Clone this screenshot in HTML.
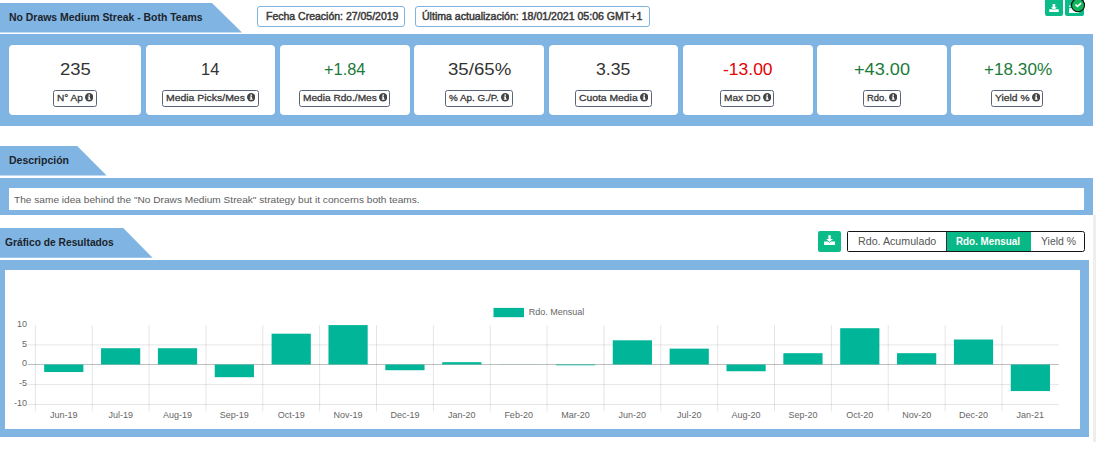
<!DOCTYPE html>
<html><head><meta charset="utf-8">
<style>
*{margin:0;padding:0;box-sizing:border-box}
html,body{width:1096px;height:452px;overflow:hidden;background:#fff;font-family:"Liberation Sans",sans-serif}
.abs{position:absolute}
.t{position:absolute;white-space:nowrap;transform-origin:0 0}
.blue{background:#80b5e3}
.card{position:absolute;top:44.7px;height:70.3px;background:#fff;border-radius:4px;box-shadow:0 0 1px #6aa6da}
.lbl{position:absolute;top:90.2px;height:16.6px;border:1px solid #5a6478;border-radius:2.5px}
.hbox{position:absolute;top:6.2px;height:20.6px;border:1px solid #7fb3e0;border-radius:3px}
.gbtn{position:absolute;background:#0cbc88;border-radius:2px}
</style></head><body>

<div class="abs" style="left:0;top:3px;width:242px;height:29.6px;background:#80b5e3;clip-path:polygon(0 0,212px 0,242px 29.6px,0 29.6px)"></div>
<div class="t" style="left:9.30px;top:10.66px;font-size:10.9px;line-height:12.535px;font-weight:bold;color:#1c232b;transform:scaleX(0.9585);">No Draws Medium Streak - Both Teams</div>
<div class="hbox" style="left:257.3px;width:148.2px"></div>
<div class="t" style="left:265.65px;top:10.59px;font-size:10px;line-height:11.5px;color:#3a3a3a;transform:scaleX(1.0491);-webkit-text-stroke:0.45px #3a3a3a;">Fecha Creación: 27/05/2019</div>
<div class="hbox" style="left:414.7px;width:234.9px"></div>
<div class="t" style="left:421.55px;top:10.59px;font-size:10px;line-height:11.5px;color:#3a3a3a;transform:scaleX(1.0554);-webkit-text-stroke:0.45px #3a3a3a;">Última actualización: 18/01/2021 05:06 GMT+1</div>
<div class="gbtn" style="left:1045.1px;top:-2px;width:17.9px;height:17.9px"></div>
<div class="gbtn" style="left:1065px;top:-2px;width:19px;height:17.9px"></div>
<svg class="abs" style="left:0;top:0" width="1096" height="30" viewBox="0 0 1096 30"><path d="M1052.6 4h2.6v3.3h1.7l-2.95 2.6-2.95-2.6h1.6z" fill="#fff"/><path d="M1049.2 9.2h3.2l1.5 1.1 1.5-1.1h3.3v2.8h-9.5z" fill="#fff"/><path d="M1069.1 5.6h1.4v1.5h-1.4z" fill="#fff"/><path d="M1069.1 8.2h1.4l1-0.4 3 0.6 2 1v3.5h-7.4z" fill="#fff"/><path d="M1069.1 11.6h10v1.3h-10z" fill="#fff"/><circle cx="1078" cy="5.3" r="6.5" fill="#12b45c" stroke="#0a0a0a" stroke-width="1.1"/><path d="M1075.4 4.6l2.2 1.8 3.5-3.4" fill="none" stroke="#fff" stroke-width="1.7"/></svg>
<div class="abs blue" style="left:0;top:34px;width:1093px;height:91.7px"></div>
<div class="card" style="left:8.85px;width:132.15px"></div>
<div class="card" style="left:145.8px;width:129.20px"></div>
<div class="card" style="left:280px;width:130.00px"></div>
<div class="card" style="left:414px;width:130.00px"></div>
<div class="card" style="left:549px;width:129.00px"></div>
<div class="card" style="left:683px;width:130.00px"></div>
<div class="card" style="left:817px;width:130.00px"></div>
<div class="card" style="left:951px;width:133.00px"></div>
<div class="t" style="left:59.50px;top:59.83px;font-size:16.9px;line-height:19.435px;color:#333;transform:scaleX(1.0926);">235</div>
<div class="t" style="left:201.10px;top:59.83px;font-size:16.9px;line-height:19.435px;color:#333;transform:scaleX(0.9738);">14</div>
<div class="t" style="left:323.80px;top:59.83px;font-size:16.9px;line-height:19.435px;color:#1b7a3a;transform:scaleX(0.9683);">+1.84</div>
<div class="t" style="left:447.50px;top:59.83px;font-size:16.9px;line-height:19.435px;color:#333;transform:scaleX(1.1042);">35/65%</div>
<div class="t" style="left:596.20px;top:59.83px;font-size:16.9px;line-height:19.435px;color:#333;transform:scaleX(1.0460);">3.35</div>
<div class="t" style="left:722.90px;top:59.83px;font-size:16.9px;line-height:19.435px;color:#e60000;transform:scaleX(1.0352);">-13.00</div>
<div class="t" style="left:854.10px;top:59.83px;font-size:16.9px;line-height:19.435px;color:#1b7a3a;transform:scaleX(1.0738);">+43.00</div>
<div class="t" style="left:983.60px;top:59.83px;font-size:16.9px;line-height:19.435px;color:#1b7a3a;transform:scaleX(1.0150);">+18.30%</div>
<div class="lbl" style="left:53.2px;width:43.40px"></div>
<div class="t" style="left:56.95px;top:91.87px;font-size:9.8px;line-height:11.27px;color:#383838;transform:scaleX(1.0291);-webkit-text-stroke:0.3px #383838;">N° Ap</div>
<svg class="abs" style="left:85.00px;top:93.40px" width="8.4" height="8.4" viewBox="0 0 84 84"><circle cx="42" cy="42" r="42" fill="#444"/><rect x="35" y="35" width="15" height="28" fill="#fff"/><rect x="28" y="35" width="10" height="9" fill="#fff"/><rect x="28" y="57" width="29" height="10" fill="#fff"/><circle cx="42" cy="21" r="8.5" fill="#fff"/></svg>
<div class="lbl" style="left:162.2px;width:96.40px"></div>
<div class="t" style="left:165.95px;top:91.87px;font-size:9.8px;line-height:11.27px;color:#383838;transform:scaleX(1.0652);-webkit-text-stroke:0.3px #383838;">Media Picks/Mes</div>
<svg class="abs" style="left:247.00px;top:93.40px" width="8.4" height="8.4" viewBox="0 0 84 84"><circle cx="42" cy="42" r="42" fill="#444"/><rect x="35" y="35" width="15" height="28" fill="#fff"/><rect x="28" y="35" width="10" height="9" fill="#fff"/><rect x="28" y="57" width="29" height="10" fill="#fff"/><circle cx="42" cy="21" r="8.5" fill="#fff"/></svg>
<div class="lbl" style="left:299.2px;width:91.30px"></div>
<div class="t" style="left:302.95px;top:91.87px;font-size:9.8px;line-height:11.27px;color:#383838;transform:scaleX(1.0343);-webkit-text-stroke:0.3px #383838;">Media Rdo./Mes</div>
<svg class="abs" style="left:378.90px;top:93.40px" width="8.4" height="8.4" viewBox="0 0 84 84"><circle cx="42" cy="42" r="42" fill="#444"/><rect x="35" y="35" width="15" height="28" fill="#fff"/><rect x="28" y="35" width="10" height="9" fill="#fff"/><rect x="28" y="57" width="29" height="10" fill="#fff"/><circle cx="42" cy="21" r="8.5" fill="#fff"/></svg>
<div class="lbl" style="left:445.4px;width:67.20px"></div>
<div class="t" style="left:449.15px;top:91.87px;font-size:9.8px;line-height:11.27px;color:#383838;transform:scaleX(1.0062);-webkit-text-stroke:0.3px #383838;">% Ap. G./P.</div>
<svg class="abs" style="left:501.00px;top:93.40px" width="8.4" height="8.4" viewBox="0 0 84 84"><circle cx="42" cy="42" r="42" fill="#444"/><rect x="35" y="35" width="15" height="28" fill="#fff"/><rect x="28" y="35" width="10" height="9" fill="#fff"/><rect x="28" y="57" width="29" height="10" fill="#fff"/><circle cx="42" cy="21" r="8.5" fill="#fff"/></svg>
<div class="lbl" style="left:575.4px;width:76.20px"></div>
<div class="t" style="left:579.15px;top:91.87px;font-size:9.8px;line-height:11.27px;color:#383838;transform:scaleX(1.0562);-webkit-text-stroke:0.3px #383838;">Cuota Media</div>
<svg class="abs" style="left:640.00px;top:93.40px" width="8.4" height="8.4" viewBox="0 0 84 84"><circle cx="42" cy="42" r="42" fill="#444"/><rect x="35" y="35" width="15" height="28" fill="#fff"/><rect x="28" y="35" width="10" height="9" fill="#fff"/><rect x="28" y="57" width="29" height="10" fill="#fff"/><circle cx="42" cy="21" r="8.5" fill="#fff"/></svg>
<div class="lbl" style="left:720.4px;width:54.10px"></div>
<div class="t" style="left:724.15px;top:91.87px;font-size:9.8px;line-height:11.27px;color:#383838;transform:scaleX(1.0343);-webkit-text-stroke:0.3px #383838;">Max DD</div>
<svg class="abs" style="left:762.90px;top:93.40px" width="8.4" height="8.4" viewBox="0 0 84 84"><circle cx="42" cy="42" r="42" fill="#444"/><rect x="35" y="35" width="15" height="28" fill="#fff"/><rect x="28" y="35" width="10" height="9" fill="#fff"/><rect x="28" y="57" width="29" height="10" fill="#fff"/><circle cx="42" cy="21" r="8.5" fill="#fff"/></svg>
<div class="lbl" style="left:863.3px;width:37.40px"></div>
<div class="t" style="left:867.05px;top:91.87px;font-size:9.8px;line-height:11.27px;color:#383838;transform:scaleX(0.9615);-webkit-text-stroke:0.3px #383838;">Rdo.</div>
<svg class="abs" style="left:889.10px;top:93.40px" width="8.4" height="8.4" viewBox="0 0 84 84"><circle cx="42" cy="42" r="42" fill="#444"/><rect x="35" y="35" width="15" height="28" fill="#fff"/><rect x="28" y="35" width="10" height="9" fill="#fff"/><rect x="28" y="57" width="29" height="10" fill="#fff"/><circle cx="42" cy="21" r="8.5" fill="#fff"/></svg>
<div class="lbl" style="left:991.4px;width:52.10px"></div>
<div class="t" style="left:995.15px;top:91.87px;font-size:9.8px;line-height:11.27px;color:#383838;transform:scaleX(1.0527);-webkit-text-stroke:0.3px #383838;">Yield %</div>
<svg class="abs" style="left:1031.90px;top:93.40px" width="8.4" height="8.4" viewBox="0 0 84 84"><circle cx="42" cy="42" r="42" fill="#444"/><rect x="35" y="35" width="15" height="28" fill="#fff"/><rect x="28" y="35" width="10" height="9" fill="#fff"/><rect x="28" y="57" width="29" height="10" fill="#fff"/><circle cx="42" cy="21" r="8.5" fill="#fff"/></svg>
<div class="abs" style="left:0;top:146px;width:106.6px;height:29.6px;background:#80b5e3;clip-path:polygon(0 0,77.2px 0,106.6px 29.6px,0 29.6px)"></div>
<div class="t" style="left:9.00px;top:153.76px;font-size:10.9px;line-height:12.535px;font-weight:bold;color:#1c232b;transform:scaleX(0.9617);">Descripción</div>
<div class="abs blue" style="left:0;top:178.1px;width:1093px;height:36.5px"></div>
<div class="abs" style="left:8.9px;top:188.1px;width:1075.3px;height:21.8px;background:#fff"></div>
<div class="t" style="left:14.20px;top:194.07px;font-size:9.8px;line-height:11.27px;color:#5e5e5e;transform:scaleX(1.0336);">The same idea behind the "No Draws Medium Streak" strategy but it concerns both teams.</div>
<div class="abs" style="left:0;top:227.7px;width:152.6px;height:30.1px;background:#80b5e3;clip-path:polygon(0 0,123px 0,152.6px 30.1px,0 30.1px)"></div>
<div class="t" style="left:5.30px;top:235.86px;font-size:10.9px;line-height:12.535px;font-weight:bold;color:#1c232b;transform:scaleX(0.9413);">Gráfico de Resultados</div>
<div class="gbtn" style="left:818px;top:230.9px;width:23px;height:21px;border-radius:2px"></div>
<svg class="abs" style="left:0;top:220px" width="1096" height="40" viewBox="0 220 1096 40"><path d="M828.4 235.2h2.3v3.9h2.3l-3.45 3-3.45-3h2.3z" fill="#fff"/><path d="M824.1 241.5h3.6l1.85 1.2 1.85-1.2h3.6v3.5h-10.9z" fill="#fff"/></svg>
<div class="abs" style="left:847.2px;top:231.1px;width:238.3px;height:20.5px;border:1.2px solid #151515;border-radius:1.5px 2.5px 2.5px 1.5px;overflow:hidden"><div class="abs" style="left:97.5px;top:0;width:85.1px;height:100%;background:#08b886"></div><div class="abs" style="left:97.5px;top:0;width:1px;height:100%;background:#333"></div></div>
<div class="t" style="left:857.60px;top:234.86px;font-size:11px;line-height:12.65px;color:#555;transform:scaleX(0.9700);">Rdo. Acumulado</div>
<div class="t" style="left:956.00px;top:234.86px;font-size:11px;line-height:12.65px;font-weight:bold;color:#fff;transform:scaleX(0.8950);">Rdo. Mensual</div>
<div class="t" style="left:1041.00px;top:234.86px;font-size:11px;line-height:12.65px;color:#555;transform:scaleX(0.9487);">Yield %</div>
<div class="abs" style="left:1093px;top:215px;width:3px;height:226.8px;background:#eee"></div>
<div class="abs blue" style="left:0;top:260px;width:1089px;height:177px"></div>
<div class="abs" style="left:4.85px;top:269.9px;width:1075.2px;height:159px;background:#fff"></div>
<svg class="abs" style="left:0;top:0" width="1096" height="452" viewBox="0 0 1096 452"><line x1="27.8" x2="1058.8" y1="344.90" y2="344.90" stroke="rgba(0,0,0,0.1)" stroke-width="1"/><line x1="27.8" x2="1058.8" y1="364.50" y2="364.50" stroke="rgba(0,0,0,0.25)" stroke-width="1"/><line x1="27.8" x2="1058.8" y1="384.60" y2="384.60" stroke="rgba(0,0,0,0.1)" stroke-width="1"/><line x1="27.8" x2="1058.8" y1="404.50" y2="404.50" stroke="rgba(0,0,0,0.1)" stroke-width="1"/><line x1="35.35" x2="35.35" y1="325" y2="411.4" stroke="rgba(0,0,0,0.1)" stroke-width="1"/><line x1="92.21" x2="92.21" y1="325" y2="411.4" stroke="rgba(0,0,0,0.1)" stroke-width="1"/><line x1="149.07" x2="149.07" y1="325" y2="411.4" stroke="rgba(0,0,0,0.1)" stroke-width="1"/><line x1="205.92" x2="205.92" y1="325" y2="411.4" stroke="rgba(0,0,0,0.1)" stroke-width="1"/><line x1="262.78" x2="262.78" y1="325" y2="411.4" stroke="rgba(0,0,0,0.1)" stroke-width="1"/><line x1="319.64" x2="319.64" y1="325" y2="411.4" stroke="rgba(0,0,0,0.1)" stroke-width="1"/><line x1="376.50" x2="376.50" y1="325" y2="411.4" stroke="rgba(0,0,0,0.1)" stroke-width="1"/><line x1="433.36" x2="433.36" y1="325" y2="411.4" stroke="rgba(0,0,0,0.1)" stroke-width="1"/><line x1="490.22" x2="490.22" y1="325" y2="411.4" stroke="rgba(0,0,0,0.1)" stroke-width="1"/><line x1="547.07" x2="547.07" y1="325" y2="411.4" stroke="rgba(0,0,0,0.1)" stroke-width="1"/><line x1="603.93" x2="603.93" y1="325" y2="411.4" stroke="rgba(0,0,0,0.1)" stroke-width="1"/><line x1="660.79" x2="660.79" y1="325" y2="411.4" stroke="rgba(0,0,0,0.1)" stroke-width="1"/><line x1="717.65" x2="717.65" y1="325" y2="411.4" stroke="rgba(0,0,0,0.1)" stroke-width="1"/><line x1="774.51" x2="774.51" y1="325" y2="411.4" stroke="rgba(0,0,0,0.1)" stroke-width="1"/><line x1="831.37" x2="831.37" y1="325" y2="411.4" stroke="rgba(0,0,0,0.1)" stroke-width="1"/><line x1="888.22" x2="888.22" y1="325" y2="411.4" stroke="rgba(0,0,0,0.1)" stroke-width="1"/><line x1="945.08" x2="945.08" y1="325" y2="411.4" stroke="rgba(0,0,0,0.1)" stroke-width="1"/><line x1="1001.94" x2="1001.94" y1="325" y2="411.4" stroke="rgba(0,0,0,0.1)" stroke-width="1"/><rect x="44.18" y="364.50" width="39.2" height="7.53" fill="#00b598"/><text x="63.78" y="418" font-size="9" fill="#666" text-anchor="middle" font-family="Liberation Sans">Jun-19</text><rect x="101.04" y="348.24" width="39.2" height="16.26" fill="#00b598"/><text x="120.64" y="418" font-size="9" fill="#666" text-anchor="middle" font-family="Liberation Sans">Jul-19</text><rect x="157.90" y="348.24" width="39.2" height="16.26" fill="#00b598"/><text x="177.50" y="418" font-size="9" fill="#666" text-anchor="middle" font-family="Liberation Sans">Aug-19</text><rect x="214.75" y="364.50" width="39.2" height="12.69" fill="#00b598"/><text x="234.35" y="418" font-size="9" fill="#666" text-anchor="middle" font-family="Liberation Sans">Sep-19</text><rect x="271.61" y="333.69" width="39.2" height="30.81" fill="#00b598"/><text x="291.21" y="418" font-size="9" fill="#666" text-anchor="middle" font-family="Liberation Sans">Oct-19</text><rect x="328.47" y="325.09" width="39.2" height="39.41" fill="#00b598"/><text x="348.07" y="418" font-size="9" fill="#666" text-anchor="middle" font-family="Liberation Sans">Nov-19</text><rect x="385.33" y="364.50" width="39.2" height="5.71" fill="#00b598"/><text x="404.93" y="418" font-size="9" fill="#666" text-anchor="middle" font-family="Liberation Sans">Dec-19</text><rect x="442.19" y="362.20" width="39.2" height="2.30" fill="#00b598"/><text x="461.79" y="418" font-size="9" fill="#666" text-anchor="middle" font-family="Liberation Sans">Jan-20</text><rect x="499.05" y="364.42" width="39.2" height="0.08" fill="#00b598"/><text x="518.65" y="418" font-size="9" fill="#666" text-anchor="middle" font-family="Liberation Sans">Feb-20</text><rect x="555.90" y="364.50" width="39.2" height="0.79" fill="#00b598"/><text x="575.50" y="418" font-size="9" fill="#666" text-anchor="middle" font-family="Liberation Sans">Mar-20</text><rect x="612.76" y="340.31" width="39.2" height="24.19" fill="#00b598"/><text x="632.36" y="418" font-size="9" fill="#666" text-anchor="middle" font-family="Liberation Sans">Jun-20</text><rect x="669.62" y="348.64" width="39.2" height="15.86" fill="#00b598"/><text x="689.22" y="418" font-size="9" fill="#666" text-anchor="middle" font-family="Liberation Sans">Jul-20</text><rect x="726.48" y="364.50" width="39.2" height="6.74" fill="#00b598"/><text x="746.08" y="418" font-size="9" fill="#666" text-anchor="middle" font-family="Liberation Sans">Aug-20</text><rect x="783.34" y="353.20" width="39.2" height="11.30" fill="#00b598"/><text x="802.94" y="418" font-size="9" fill="#666" text-anchor="middle" font-family="Liberation Sans">Sep-20</text><rect x="840.20" y="328.22" width="39.2" height="36.28" fill="#00b598"/><text x="859.80" y="418" font-size="9" fill="#666" text-anchor="middle" font-family="Liberation Sans">Oct-20</text><rect x="897.05" y="353.20" width="39.2" height="11.30" fill="#00b598"/><text x="916.65" y="418" font-size="9" fill="#666" text-anchor="middle" font-family="Liberation Sans">Nov-20</text><rect x="953.91" y="339.52" width="39.2" height="24.98" fill="#00b598"/><text x="973.51" y="418" font-size="9" fill="#666" text-anchor="middle" font-family="Liberation Sans">Dec-20</text><rect x="1010.77" y="364.50" width="39.2" height="26.57" fill="#00b598"/><text x="1030.37" y="418" font-size="9" fill="#666" text-anchor="middle" font-family="Liberation Sans">Jan-21</text><text x="27.1" y="326.75" font-size="9" fill="#666" text-anchor="end" font-family="Liberation Sans">10</text><text x="27.1" y="346.57" font-size="9" fill="#666" text-anchor="end" font-family="Liberation Sans">5</text><text x="27.1" y="366.40" font-size="9" fill="#666" text-anchor="end" font-family="Liberation Sans">0</text><text x="27.1" y="386.22" font-size="9" fill="#666" text-anchor="end" font-family="Liberation Sans">-5</text><text x="27.1" y="406.05" font-size="9" fill="#666" text-anchor="end" font-family="Liberation Sans">-10</text><rect x="493.5" y="307.9" width="30.5" height="9.3" fill="#00b598"/><text x="528.7" y="314.9" font-size="9" fill="#666" font-family="Liberation Sans">Rdo. Mensual</text></svg>
</body></html>
